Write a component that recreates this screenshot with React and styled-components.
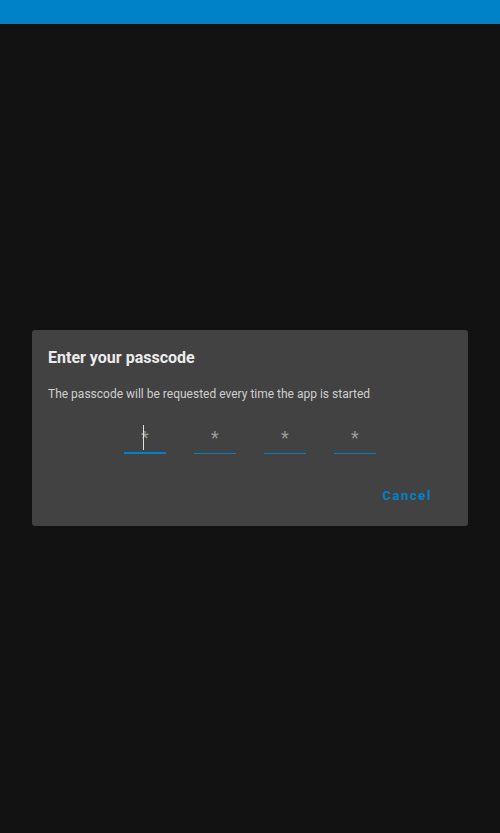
import styled, { createGlobalStyle } from "styled-components";

const Global = createGlobalStyle`
  html, body {
    margin: 0;
    padding: 0;
    background: #121212;
    font-family: Roboto, "Liberation Sans", sans-serif;
  }
  #root {
    height: 100vh;
  }
`;

const Screen = styled.div`
  height: 100vh;
  display: flex;
  flex-direction: column;
  background: #121212;
`;

const StatusBar = styled.div`
  height: 24px;
  flex-shrink: 0;
  background: #0082c8;
`;

const Backdrop = styled.main`
  flex: 1;
  display: flex;
  align-items: center;
  justify-content: center;
`;

// margin-bottom keeps the centred box on a whole pixel
const Dialog = styled.section`
  width: 436px;
  box-sizing: border-box;
  background: #424242;
  border-radius: 3px;
  padding: 18px 16px 0;
  margin-bottom: 1px;
  color: #e6e6e6;
`;

const Title = styled.h2`
  margin: 0;
  font-size: 16px;
  line-height: 20px;
  font-weight: 700;
  color: #ececec;
`;

const Message = styled.p`
  margin: 18px 0 0;
  font-size: 12px;
  line-height: 16px;
  color: #cfcfcf;
`;

const CodeRow = styled.div`
  display: flex;
  justify-content: center;
  gap: 28px;
  margin-top: 20px;
`;

const Digit = styled.div`
  position: relative;
  width: 42px;
  height: 32px;
  display: flex;
  align-items: center;
  justify-content: center;
  font-size: 18px;
  color: #9a9a9a;

  &::after {
    content: "";
    position: absolute;
    left: 0;
    right: 0;
    bottom: 0;
    height: ${(p) => (p.$focused ? "2px" : "1px")};
    background: #0082c8;
  }
`;

const Star = styled.span`
  line-height: 1;
  margin-bottom: 1px;
`;

const Caret = styled.span`
  position: absolute;
  left: 19px;
  top: 3px;
  width: 1px;
  height: 25px;
  background: #e0e0e0;
`;

const Actions = styled.div`
  display: flex;
  justify-content: flex-end;
  padding: 32px 20px 20px 0;
`;

const TextButton = styled.button`
  border: none;
  background: none;
  padding: 0;
  font-family: inherit;
  font-size: 13px;
  font-weight: 700;
  letter-spacing: 1.6px;
  color: #0082c8;
  line-height: 20px;
  cursor: pointer;
`;

const App = () => {
  const digits = [0, 1, 2, 3];

  return (
    <>
      <Global />
      <Screen>
        <StatusBar />
        <Backdrop>
          <Dialog>
            <Title>Enter your passcode</Title>
            <Message>The passcode will be requested every time the app is started</Message>
            <CodeRow>
              {digits.map((d) => (
                <Digit key={d} $focused={d === 0}>
                  {d === 0 && <Caret />}
                  <Star>*</Star>
                </Digit>
              ))}
            </CodeRow>
            <Actions>
              <TextButton>Cancel</TextButton>
            </Actions>
          </Dialog>
        </Backdrop>
      </Screen>
    </>
  );
};

export default App;
